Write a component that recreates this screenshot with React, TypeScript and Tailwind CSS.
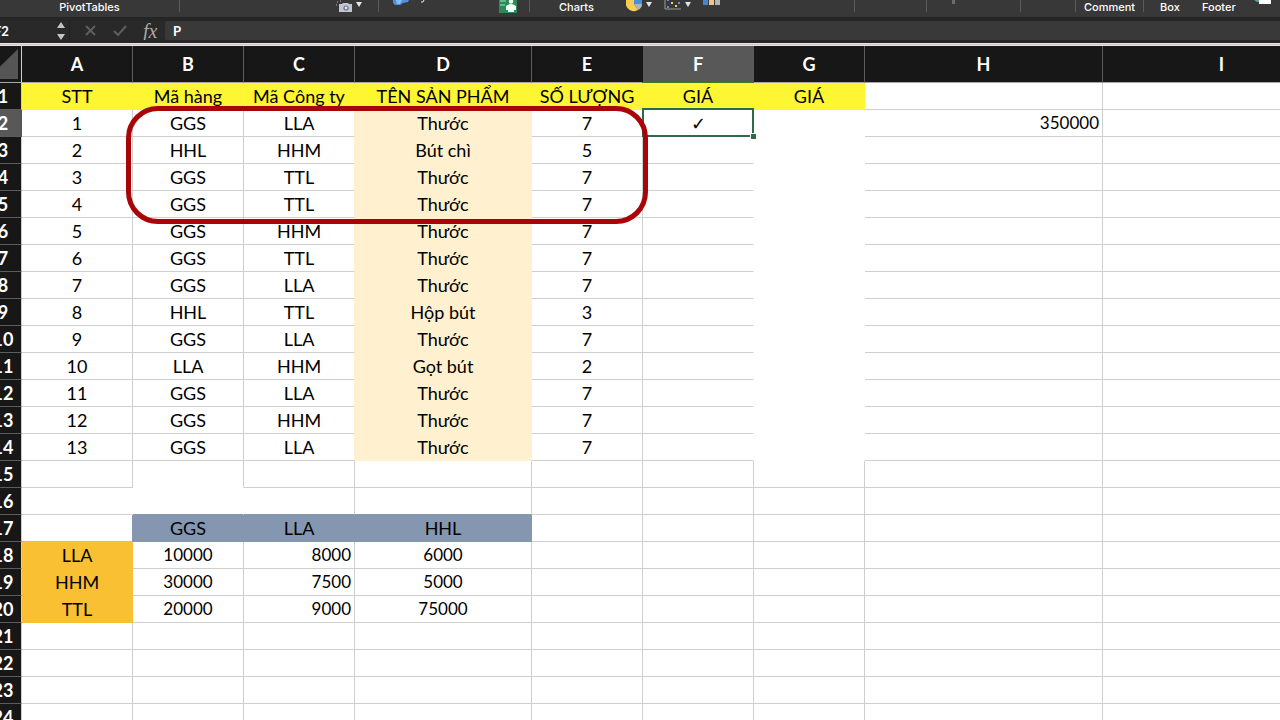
import React from 'react';
import clsx from 'clsx';

type CellStyle = 'plain' | 'yellow' | 'cream' | 'blue' | 'orange' | 'blank';

interface Cell {
  text?: string;
  style?: CellStyle;
  align?: 'center' | 'right';
  noRight?: boolean;
  noBottom?: boolean;
}

const columns = [
  { name: 'A', width: 'w-[111px]' },
  { name: 'B', width: 'w-[111px]' },
  { name: 'C', width: 'w-[111px]' },
  { name: 'D', width: 'w-[177px]' },
  { name: 'E', width: 'w-[111px]' },
  { name: 'F', width: 'w-[111px]' },
  { name: 'G', width: 'w-[111px]' },
  { name: 'H', width: 'w-[238px]' },
  { name: 'I', width: 'w-[238px]' },
];

const headings = ['STT', 'Mã hàng', 'Mã Công ty', 'TÊN SẢN PHẨM', 'SỐ LƯỢNG', 'GIÁ', 'GIÁ'];

const items = [
  ['GGS', 'LLA', 'Thước', '7'],
  ['HHL', 'HHM', 'Bút chì', '5'],
  ['GGS', 'TTL', 'Thước', '7'],
  ['GGS', 'TTL', 'Thước', '7'],
  ['GGS', 'HHM', 'Thước', '7'],
  ['GGS', 'TTL', 'Thước', '7'],
  ['GGS', 'LLA', 'Thước', '7'],
  ['HHL', 'TTL', 'Hộp bút', '3'],
  ['GGS', 'LLA', 'Thước', '7'],
  ['LLA', 'HHM', 'Gọt bút', '2'],
  ['GGS', 'LLA', 'Thước', '7'],
  ['GGS', 'HHM', 'Thước', '7'],
  ['GGS', 'LLA', 'Thước', '7'],
];

const prices = [
  ['LLA', '10000', '8000', '6000'],
  ['HHM', '30000', '7500', '5000'],
  ['TTL', '20000', '9000', '75000'],
];

const emptyCells = (count: number): Cell[] => Array.from({ length: count }, () => ({}));

const rows: Cell[][] = [
  [...headings.map((text): Cell => ({ text, style: 'yellow' })), ...emptyCells(2)],
  ...items.map(([code, company, product, amount], i): Cell[] => [
    { text: String(i + 1) },
    { text: code },
    { text: company },
    { text: product, style: 'cream' },
    { text: amount },
    { text: i === 0 ? '✓' : '', noRight: true },
    { style: 'blank' },
    { text: i === 0 ? '350000' : '', align: 'right' },
    {},
  ]),
  [{}, { noBottom: true }, ...emptyCells(7)],
  [{ noRight: true }, { noRight: true }, ...emptyCells(7)],
  [
    {},
    { text: 'GGS', style: 'blue' },
    { text: 'LLA', style: 'blue' },
    { text: 'HHL', style: 'blue' },
    ...emptyCells(5),
  ],
  ...prices.map(([company, ggs, lla, hhl]): Cell[] => [
    { text: company, style: 'orange' },
    { text: ggs },
    { text: lla, align: 'right' },
    { text: hhl },
    ...emptyCells(5),
  ]),
  ...Array.from({ length: 4 }, () => emptyCells(9)),
];

const fills: Record<CellStyle, string> = {
  plain: 'bg-white',
  yellow: 'bg-[#fff633]',
  cream: 'bg-[#fff1cf]',
  blue: 'bg-[#8597b0]',
  orange: 'bg-[#f8c032]',
  blank: 'bg-white',
};

// A filled cell also covers the gridlines on its left and top side
const rightEdge: Record<CellStyle, string> = {
  plain: 'border-r-[#cfcfcf]',
  yellow: 'border-r-[#fff633]',
  cream: 'border-r-[#fff1cf]',
  blue: 'border-r-[#8597b0]',
  orange: 'border-r-[#f8c032]',
  blank: 'border-r-white',
};

const bottomEdge: Record<CellStyle, string> = {
  plain: 'border-b-[#cfcfcf]',
  yellow: 'border-b-[#fff633]',
  cream: 'border-b-[#fff1cf]',
  blue: 'border-b-[#8597b0]',
  orange: 'border-b-[#f8c032]',
  blank: 'border-b-white',
};

function SheetCell({ row, col }: { row: number; col: number }) {
  const cell = rows[row][col];
  const style = cell.style ?? 'plain';
  const next = rows[row][col + 1]?.style ?? 'plain';
  const below = rows[row + 1]?.[col].style ?? 'plain';
  const selected = row === 1 && col === 5;
  const isNumber = /^\d{4,}$/.test(cell.text ?? '');

  let right = rightEdge[style === 'plain' ? next : style];
  if (cell.noRight) right = 'border-r-white';
  let bottom = bottomEdge[style === 'plain' ? below : style];
  if (cell.noBottom) bottom = 'border-b-white';

  return (
    <td
      className={clsx(
        'h-[27px] border-r border-b px-[3px] py-0 leading-[26px] whitespace-nowrap',
        cell.align === 'right' ? 'text-right' : 'text-center',
        isNumber ? 'text-[17px]' : 'text-[18px]',
        selected && 'relative',
        fills[style],
        right,
        bottom
      )}
    >
      {cell.text}
      {selected && (
        <span className="absolute -inset-x-px -top-0.5 -bottom-px border-2 border-[#2f6b4a]">
          <span className="absolute -right-1 -bottom-1 size-1.5 border-t border-l border-white bg-[#2f6b4a]" />
        </span>
      )}
    </td>
  );
}

function Caret() {
  return (
    <svg className="h-[5px] w-[6px] shrink-0" viewBox="0 0 6 5" fill="#e6e6e6">
      <path d="M0 0h6L3 5z" />
    </svg>
  );
}

function CameraIcon() {
  return (
    <svg className="h-[14px] w-[16px] shrink-0" viewBox="0 0 16 14">
      <path d="M1 2h1M4 1h1M0 5h1" stroke="#b8b8b8" />
      <path d="M3 4h3l1-1h5l1 1h3v8H3z" fill="#c3c6d0" />
      <circle cx="10" cy="8" r="2.6" fill="#6d7386" />
      <circle cx="10" cy="8" r="1.4" fill="#dfe3ec" />
    </svg>
  );
}

function AddInIcon() {
  return (
    <svg className="h-[14px] w-[32px] shrink-0" viewBox="0 0 32 14">
      <path d="M0 0h16l-1 2-5 1-3 2H2L0 3z" fill="#4f8fdc" />
      <path d="M3 0h6L7 4H4z" fill="#8dbbf0" />
      <path d="M31 0l-1 2h-2" stroke="#e6e6e6" fill="none" />
    </svg>
  );
}

function PeopleIcon() {
  return (
    <svg className="h-[13px] w-[18px] shrink-0" viewBox="0 0 18 13">
      <path d="M0 0h18v13H0z" fill="#2b8a57" />
      <path d="M1 0h6v2H1zM1 4h5v2H1z" fill="#66b98a" />
      <circle cx="12" cy="1.5" r="2.2" fill="#f3fff8" />
      <path d="M7 6q5-4 10 0v4h-2v2H9v-2H7z" fill="#f3fff8" />
    </svg>
  );
}

function PieIcon() {
  return (
    <svg className="h-[14px] w-[16px] shrink-0" viewBox="0 0 16 14">
      <path d="M0 0h8v4l4 6A8 8 0 0 1 0 5z" fill="#f6ce55" />
      <path d="M8 0h8v4H8z" fill="#4a90d9" />
      <path d="M8 4h8q0 4-4 6z" fill="#b5b5b5" />
    </svg>
  );
}

function ScatterIcon() {
  return (
    <svg className="h-[14px] w-[17px] shrink-0" viewBox="0 0 17 14">
      <path d="M1 0v9h16" stroke="#9a9a9a" fill="none" />
      <path d="M7 2h2v2H7zM11 5h2v2h-2z" fill="#f6ce55" />
      <path d="M3 6h2v2H3zM14 2h2v2h-2zM3 0h2v1H3z" fill="#5b8def" />
    </svg>
  );
}

function Ribbon() {
  return (
    <div className="flex h-[17px] overflow-hidden bg-[#383838] font-[Inter,sans-serif] text-[11px] leading-[14px] font-medium text-white">
      <div className="flex h-3 w-[180px] shrink-0 justify-center border-r border-[#5a5a5a]">PivotTables</div>
      <div className="flex h-3 w-[199px] shrink-0 items-start justify-end gap-1 border-r border-[#5a5a5a] pr-4">
        <CameraIcon />
        <span className="pt-0.5"><Caret /></span>
      </div>
      <div className="flex h-3 w-[151px] shrink-0 justify-between border-r border-[#5a5a5a] pr-3 pl-3.5">
        <AddInIcon />
        <PeopleIcon />
      </div>
      <div className="flex h-3 w-[325px] shrink-0 border-r border-[#5a5a5a] pl-[29px]">
        <span>Charts</span>
        <div className="ml-8 flex items-start gap-3">
          <button type="button" aria-label="Pie chart" className="flex items-start gap-1">
            <PieIcon />
            <span className="pt-0.5"><Caret /></span>
          </button>
          <button type="button" aria-label="Scatter chart" className="flex items-start gap-1">
            <ScatterIcon />
            <span className="pt-0.5"><Caret /></span>
          </button>
          <svg className="h-[5px] w-[17px]" viewBox="0 0 17 5">
            <path d="M0 0h5v5H0z" fill="#4a86c5" />
            <path d="M6 0h5v5H6z" fill="#f2c48d" />
            <path d="M12 0h5v5h-5z" fill="#b5b5b5" />
          </svg>
        </div>
      </div>
      <div className="h-3 w-[72px] shrink-0 border-r border-[#5a5a5a]" />
      <div className="flex h-3 w-[94px] shrink-0 border-r border-[#5a5a5a] pl-[25px]">
        <span className="h-1 w-[3px] bg-[#6b6b6b]" />
      </div>
      <div className="h-3 w-[55px] shrink-0 border-r border-[#5a5a5a]" />
      <div className="flex h-3 w-[68px] shrink-0 justify-center border-r border-[#5a5a5a]">Comment</div>
      <div className="flex flex-1 items-start pl-4">
        <span className="w-[42px]">Box</span>
        <span className="w-[52px]">Footer</span>
        <svg className="h-[5px] w-[18px]" viewBox="0 0 18 5">
          <path d="M0 0h7v2H3z" fill="#5d9a96" />
          <path d="M5 0h12v4H5z" fill="#ffffff" />
        </svg>
      </div>
    </div>
  );
}

function FormulaBar() {
  return (
    <div className="flex h-[26px] overflow-hidden border-t-4 border-b-3 border-[#262626] bg-[#292929] text-[13px] font-bold text-white">
      <div className="flex w-[70px] shrink-0 items-center justify-between border-r border-[#202020] pr-1">
        <input
          aria-label="Name box"
          defaultValue="F2"
          className="-ml-1.5 w-10 bg-transparent leading-[18px] outline-none"
        />
        <svg className="h-[18px] w-2" viewBox="0 0 8 18" fill="#c4c4c4">
          <path d="M4 0l4 6H0zM0 12h8l-4 6z" />
        </svg>
      </div>
      <div className="flex w-[95px] shrink-0 items-center pl-[15px]">
        <button type="button" aria-label="Cancel">
          <svg className="size-[11px]" viewBox="0 0 11 11" stroke="#5e5e5e" strokeWidth="2">
            <path d="M1 1l9 9M10 1l-9 9" />
          </svg>
        </button>
        <button type="button" aria-label="Enter" className="ml-[17px]">
          <svg className="h-[11px] w-[14px]" viewBox="0 0 14 11" fill="none" stroke="#5e5e5e" strokeWidth="2">
            <path d="M1 6l4 4 8-9" />
          </svg>
        </button>
        <button
          type="button"
          aria-label="Insert function"
          className="ml-4 font-['Liberation_Serif',serif] text-[20px] leading-[18px] font-normal text-[#a8a8a8] italic"
        >
          fx
        </button>
      </div>
      <input
        aria-label="Formula"
        defaultValue="P"
        className="min-w-0 flex-1 rounded-l-xs bg-[#393939] px-2 leading-[18px] outline-none"
      />
    </div>
  );
}

export default function App() {
  return (
    <div className="h-screen overflow-hidden bg-white font-[Lato,'Noto_Sans',sans-serif] text-black">
      <Ribbon />
      <FormulaBar />
      <div className="h-[3px] border-y border-[#e8e2e4] bg-[#cfc8ca]" />

      {/* The sheet is scrolled a little to the right */}
      <div className="relative -ml-[15px]">
        <table className="w-max table-fixed border-separate border-spacing-0">
          <thead>
            <tr className="h-[37px] text-[18px] text-white">
              <th className="w-[37px] border-r border-b border-r-[#cfcfcf] border-b-[#a8a8a8] bg-[#171717] p-0">
                <svg className="mr-[3px] ml-auto h-[30px] w-[31px]" viewBox="0 0 31 30" fill="#555555">
                  <path d="M31 0v30H0z" />
                </svg>
              </th>
              {columns.map((c) => (
                <th
                  key={c.name}
                  scope="col"
                  className={clsx(
                    'border-r border-b p-0 font-bold',
                    c.width,
                    c.name === 'F'
                      ? 'border-r-[#585858] border-b-[#3d7a1c] bg-[#585858]'
                      : 'border-b-[#a8a8a8] bg-[#171717]',
                    c.name === 'E' && 'border-r-[#171717]',
                    c.name !== 'E' && c.name !== 'F' && 'border-r-[#5c5c5c]'
                  )}
                >
                  {c.name}
                </th>
              ))}
            </tr>
          </thead>
          <tbody>
            {rows.map((row, r) => (
              <tr key={r}>
                <th
                  scope="row"
                  className={clsx(
                    'border-r border-b border-b-[#5c5c5c] p-0 text-[18px] leading-[26px] font-bold text-white',
                    r === 1 ? 'border-r-[#2f6b4a] bg-[#585858]' : 'border-r-[#cfcfcf] bg-[#171717]'
                  )}
                >
                  {r + 1}
                </th>
                {row.map((_, c) => (
                  <SheetCell key={c} row={r} col={c} />
                ))}
              </tr>
            ))}
          </tbody>
        </table>

        {/* Marker drawn over B2:E5 */}
        <div className="pointer-events-none absolute top-[60px] left-[141px] h-[118px] w-[522px] rounded-[32px] border-5 border-[#a90508]" />
      </div>
    </div>
  );
}
